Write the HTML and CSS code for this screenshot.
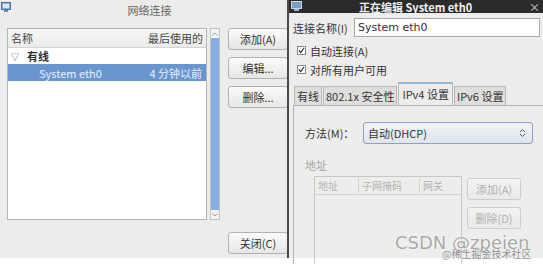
FILE: index.html
```html
<!DOCTYPE html>
<html lang="zh-CN">
<head>
<meta charset="UTF-8">
<title>网络连接</title>
<link rel="stylesheet" href="styles.css">
</head>
<body>
<div class="screen">
  <!-- network connections window (behind) -->
  <div class="win-left">
    <div class="left-title">
      <svg class="app-icon" width="11" height="12" viewBox="0 0 11 12">
        <rect x="0.5" y="1.5" width="9" height="7" fill="#8fb0d8" stroke="#4a6f9e"/>
        <rect x="2" y="3" width="6" height="4" fill="#dce8f6"/>
        <rect x="3" y="9" width="4" height="2" fill="#6b8bb5"/>
      </svg>
      <span>网络连接</span>
    </div>
    <div class="left-main">
      <div class="list">
        <div class="list-head">
          <span>名称</span>
          <span>最后使用的</span>
        </div>
        <div class="list-group"><span class="tri">▽</span>有线</div>
        <div class="list-row selected">
          <span>System eth0</span>
          <span>4 分钟以前</span>
        </div>
      </div>
      <div class="scrollbar">
        <div class="sb-arrow">
          <svg width="6" height="4" viewBox="0 0 6 4"><path d="M0.5 3.5 L3 1 L5.5 3.5" fill="none" stroke="#999"/></svg>
        </div>
        <div class="sb-thumb"></div>
        <div class="sb-arrow">
          <svg width="6" height="4" viewBox="0 0 6 4"><path d="M0.5 0.5 L3 3 L5.5 0.5" fill="none" stroke="#999"/></svg>
        </div>
      </div>
      <div class="left-buttons">
        <button class="btn">添加(A)</button>
        <button class="btn">编辑...</button>
        <button class="btn">删除...</button>
        <button class="btn close-btn">关闭(C)</button>
      </div>
    </div>
  </div>

  <!-- editing dialog (front) -->
  <div class="win-right">
    <div class="right-title">
      <svg class="app-icon" width="12" height="11" viewBox="0 0 12 11">
        <rect x="0.5" y="0.5" width="10" height="7" fill="#7f9cc4" stroke="#c8d6ea"/>
        <rect x="3" y="8" width="5" height="2" fill="#9fb6d6"/>
      </svg>
      <span class="title-text">正在编辑 System eth0</span>
      <span class="title-close">×</span>
    </div>
    <div class="right-body">
      <div class="name-row">
        <label>连接名称(I)</label>
        <div class="entry">System eth0</div>
      </div>
      <div class="checks">
        <div class="check-row">
          <svg width="9" height="9" viewBox="0 0 9 9"><rect x="0.5" y="0.5" width="8" height="8" fill="#fff" stroke="#888"/><path d="M2 4.5 L3.8 6.5 L7 2" fill="none" stroke="#333" stroke-width="1.2"/></svg>
          <span>自动连接(A)</span>
        </div>
        <div class="check-row">
          <svg width="9" height="9" viewBox="0 0 9 9"><rect x="0.5" y="0.5" width="8" height="8" fill="#fff" stroke="#888"/><path d="M2 4.5 L3.8 6.5 L7 2" fill="none" stroke="#333" stroke-width="1.2"/></svg>
          <span>对所有用户可用</span>
        </div>
      </div>
      <div class="tabs">
        <div class="tab">有线</div>
        <div class="tab">802.1x 安全性</div>
        <div class="tab active">IPv4 设置</div>
        <div class="tab">IPv6 设置</div>
      </div>
      <div class="tab-panel">
        <div class="method-row">
          <label>方法(M)：</label>
          <div class="select">
            <span>自动(DHCP)</span>
            <svg width="7" height="10" viewBox="0 0 7 10"><path d="M1 4 L3.5 1.5 L6 4 M1 6 L3.5 8.5 L6 6" fill="none" stroke="#555"/></svg>
          </div>
        </div>
        <div class="addr-label">地址</div>
        <div class="addr-row">
          <div class="addr-table">
            <div class="addr-head">
              <span class="c1">地址</span>
              <span class="c2">子网掩码</span>
              <span class="c3">网关</span>
            </div>
          </div>
          <div class="addr-buttons">
            <button class="btn dim">添加(A)</button>
            <button class="btn dim">删除(D)</button>
          </div>
        </div>
      </div>
    </div>
  </div>

  <div class="watermark">
    <span class="wm-big">CSDN @zpeien</span>
    <span class="wm-small">@稀土掘金技术社区</span>
  </div>
</div>
</body>
</html>
```

FILE: styles.css
```css
body {
  margin: 0;
  padding: 0;
  background-color: #fff;
  font-family: "Noto Sans CJK SC", "DejaVu Sans", sans-serif;
  font-size: 11px;
  color: #333;
}
.screen {
  position: relative;
  width: 543px;
  height: 264px;
  display: flex;
  overflow: hidden;
}

/* left window */
.win-left {
  width: 287px;
  height: 258px;
  background-color: #ececea;
  overflow: hidden;
  flex-shrink: 0;
}
.left-title {
  height: 24px;
  display: flex;
  align-items: flex-start;
}
.left-title .app-icon {
  margin: 1px 0 0 1px;
}
.left-title span {
  flex: 1;
  text-align: center;
  margin-top: 2px;
  color: #666;
}
.left-main {
  display: flex;
  padding: 4px 0 0 7px;
}
.list {
  width: 198px;
  height: 190px;
  flex-shrink: 0;
  background-color: #fff;
  border: 1px solid #b4b4b2;
}
.list-head {
  height: 18px;
  display: flex;
  justify-content: space-between;
  align-items: center;
  padding: 0 3px;
  background: linear-gradient(#f7f7f6, #ebebea);
  border-bottom: 1px solid #d4d4d2;
  color: #444;
}
.list-group {
  height: 16px;
  display: flex;
  align-items: center;
  padding-left: 3px;
  font-weight: bold;
}
.tri {
  font-size: 8px;
  font-weight: normal;
  margin-right: 8px;
  color: #555;
}
.list-row {
  height: 17px;
  display: flex;
  justify-content: space-between;
  align-items: center;
  padding: 0 4px 0 31px;
}
.list-row.selected {
  background-color: #6a96d0;
  color: #e8f0fb;
}
.scrollbar {
  width: 10px;
  height: 192px;
  flex-shrink: 0;
  margin-left: 3px;
  display: flex;
  flex-direction: column;
  border: 1px solid #c4c4c2;
  box-sizing: border-box;
  background-color: #f4f4f3;
}
.sb-arrow {
  height: 9px;
  display: flex;
  align-items: center;
  justify-content: center;
  background-color: #f2f2f1;
}
.sb-thumb {
  flex: 1;
  background-color: #86aee5;
}
.left-buttons {
  height: 226px;
  margin-left: 8px;
  display: flex;
  flex-direction: column;
  gap: 7px;
}
.btn {
  width: 60px;
  height: 22px;
  padding: 0;
  font-family: "Noto Sans CJK SC", "DejaVu Sans", sans-serif;
  font-size: 11px;
  color: #333;
  background: linear-gradient(#fbfbfa, #e6e6e4);
  border: 1px solid #b2b2b0;
  border-radius: 3px;
  text-align: center;
}
.close-btn {
  margin-top: auto;
}

/* right window */
.win-right {
  width: 256px;
  height: 258px;
  flex-shrink: 0;
  display: flex;
  flex-direction: column;
  border-left: 2px solid #4a4a4a;
  box-sizing: border-box;
  background-color: #ededeb;
}
.right-title {
  height: 13px;
  background-color: #2b2b2b;
  display: flex;
  align-items: center;
  color: #f2f2f2;
  font-weight: bold;
}
.right-title .app-icon {
  margin-left: 2px;
}
.title-text {
  margin-left: 56px;
  flex: 1;
}
.title-close {
  margin-right: 3px;
  font-weight: normal;
  color: #ddd;
}
.right-body {
  flex: 1;
  display: flex;
  flex-direction: column;
  padding-left: 4px;
}
.name-row {
  display: flex;
  align-items: center;
  margin-top: 5px;
  padding-right: 3px;
}
.name-row label {
  width: 61px;
  flex-shrink: 0;
}
.entry {
  flex: 1;
  height: 17px;
  line-height: 17px;
  padding-left: 3px;
  background-color: #fff;
  border: 1px solid #a8a8a6;
  font-family: "DejaVu Sans", sans-serif;
}
.checks {
  margin-top: 4px;
  display: flex;
  flex-direction: column;
}
.check-row {
  display: flex;
  align-items: center;
  gap: 4px;
  height: 19px;
  padding-left: 4px;
}
.tabs {
  display: flex;
  align-items: flex-end;
  margin-top: 5px;
  height: 21px;
  padding-left: 1px;
}
.tab {
  height: 18px;
  line-height: 18px;
  padding: 0 2px;
  background-color: #dededc;
  border: 1px solid #b8b8b6;
  border-bottom: none;
  margin-right: 1px;
  white-space: nowrap;
}
.tab.active {
  height: 21px;
  line-height: 21px;
  background-color: #ededeb;
  border-top: 2px solid #9ab4da;
  padding: 0 3px;
}
.tab-panel {
  flex: 1;
  border-left: 1px solid #b4b4b2;
  border-top: 1px solid #b4b4b2;
  padding: 16px 0 0 11px;
  display: flex;
  flex-direction: column;
}
.method-row {
  display: flex;
  align-items: center;
}
.method-row label {
  width: 58px;
  flex-shrink: 0;
}
.select {
  width: 158px;
  height: 20px;
  flex-shrink: 0;
  display: flex;
  justify-content: space-between;
  align-items: center;
  padding: 0 6px 0 4px;
  background: linear-gradient(#f2f4f8, #e1e4ea);
  border: 1px solid #8aa2c6;
  border-radius: 3px;
}
.addr-label {
  margin-top: 13px;
  color: #a6a6a4;
}
.addr-row {
  display: flex;
  margin: 3px 0 0 9px;
}
.addr-table {
  width: 146px;
  height: 90px;
  flex-shrink: 0;
  border: 1px solid #c6c6c4;
  border-bottom: none;
}
.addr-head {
  height: 17px;
  display: flex;
  align-items: center;
  border-bottom: 1px solid #d2d2d0;
  color: #b4b4b2;
  font-size: 10px;
}
.addr-head span {
  padding-left: 3px;
  border-right: 1px solid #d2d2d0;
  box-sizing: border-box;
}
.addr-head .c1 {
  width: 44px;
}
.addr-head .c2 {
  width: 61px;
}
.addr-head .c3 {
  border-right: none;
}
.addr-buttons {
  display: flex;
  flex-direction: column;
  gap: 7px;
  margin: 2px 0 0 5px;
}
.btn.dim {
  width: 54px;
  color: #b0b0ae;
  border-color: #cdcdcb;
  background: linear-gradient(#f3f3f2, #e9e9e7);
}

/* watermark overlay */
.watermark {
  position: absolute;
  left: 395px;
  top: 232px;
  white-space: nowrap;
}
.wm-big {
  display: block;
  font-family: "DejaVu Sans", sans-serif;
  font-size: 18px;
  color: #a8a8a8;
  text-shadow: 0 0 2px #fff, 0 0 1px #fff;
}
.wm-small {
  position: absolute;
  left: 47px;
  top: 14px;
  font-size: 10px;
  color: #8e8e8e;
  text-shadow: 0 0 1px #fff;
}
```
